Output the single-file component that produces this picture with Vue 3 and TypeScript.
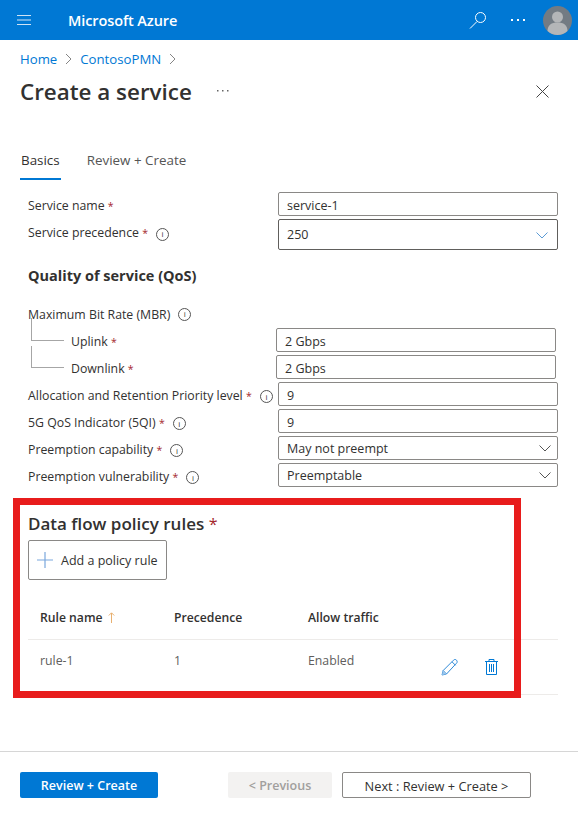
<script setup lang="ts">
// Create a service blade: basics form with the data flow rule table called out.
interface Field { label: string; value: string; select: boolean }

const qosFields: Field[] = [
  { label: "Allocation and Retention Priority level", value: "9", select: false },
  { label: "5G QoS Indicator (5QI)", value: "9", select: false },
  { label: "Preemption capability", value: "May not preempt", select: true },
  { label: "Preemption vulnerability", value: "Preemptable", select: true },
];
</script>

<template>
  <div class="page">
    <header class="topbar">
      <svg class="menu" width="14" height="10" viewBox="0 0 14 10"><path d="M0 .5h14M0 5h14M0 9.500h14" stroke="#cfe3f5" stroke-width="1.200" fill="none" /></svg>
      <span class="brand">Microsoft Azure</span>
      <svg class="search" width="18" height="18" viewBox="0 0 18 18" fill="none" stroke="#fff" stroke-width="1"><circle cx="11.500" cy="6.500" r="5" /><path d="M8 10.500l-7 7" /></svg>
      <svg class="more" width="14" height="3" viewBox="0 0 14 3" fill="#fff"><rect x="0" y="0" width="2" height="2" /><rect x="6" y="0" width="2" height="2" /><rect x="12" y="0" width="2" height="2" /></svg>
      <svg class="avatar" width="29" height="29" viewBox="0 0 29 29">
        <circle cx="14.500" cy="14.500" r="14.500" fill="#737b83" />
        <circle cx="14.500" cy="11" r="5.500" fill="#b4b6b8" />
        <path d="M4.500 25c0-6 4-8.500 10-8.500s10 2.500 10 8.500a14.500 14.500 0 0 1-20 0z" fill="#b4b6b8" />
      </svg>
    </header>

    <nav class="crumbs">
      <a>Home</a>
      <svg width="7" height="12" viewBox="0 0 7 12"><path d="M1 1l5 5-5 5" fill="none" stroke="#777" stroke-width=".9" /></svg>
      <a>ContosoPMN</a>
      <svg width="7" height="12" viewBox="0 0 7 12"><path d="M1 1l5 5-5 5" fill="none" stroke="#777" stroke-width=".9" /></svg>
    </nav>

    <div class="title-row">
      <h1>Create a service</h1>
      <svg class="title-more" width="12" height="2" viewBox="0 0 12 2" fill="#666"><rect x="0" y="0" width="1.500" height="1.500" /><rect x="5" y="0" width="1.500" height="1.500" /><rect x="10" y="0" width="1.500" height="1.500" /></svg>
      <svg class="close" width="13" height="13" viewBox="0 0 13 13"><path d="M.5.5l12 12M12.500.5l-12 12" stroke="#444" stroke-width="1" fill="none" /></svg>
    </div>

    <div class="tabs">
      <span class="tab active">Basics</span>
      <span class="tab">Review + Create</span>
    </div>

    <section class="form">
      <div class="row">
        <label>Service name <i>*</i></label>
        <div class="input text">service-1</div>
      </div>
      <div class="row row-tall">
        <label>Service precedence <i>*</i> <span class="info">i</span></label>
        <div class="input tall">250
          <svg class="chev blue" width="12" height="7" viewBox="0 0 12 7"><path d="M.5.5l5.500 5.500L11.500.5" fill="none" stroke="#5b9bd5" stroke-width="1" /></svg>
        </div>
      </div>

      <h2>Quality of service (QoS)</h2>

      <div class="mbr">Maximum Bit Rate (MBR) <span class="info">i</span></div>
      <div class="row sub">
        <span class="tree" />
        <label>Uplink <i>*</i></label>
        <div class="input text">2 Gbps</div>
      </div>
      <div class="row sub">
        <span class="tree second" />
        <label>Downlink <i>*</i></label>
        <div class="input text">2 Gbps</div>
      </div>
      <div v-for="f in qosFields" :key="f.label" class="row">
        <label>{{ f.label }} <i>*</i> <span class="info">i</span></label>
        <div class="input" :class="{ text: !f.select }">{{ f.value }}
          <svg v-if="f.select" class="chev" width="12" height="7" viewBox="0 0 12 7"><path d="M.5.5l5.500 5.500L11.500.5" fill="none" stroke="#555" stroke-width="1" /></svg>
        </div>
      </div>
    </section>

    <section class="rules">
      <h3>Data flow policy rules <i>*</i></h3>
      <button class="add">
        <svg width="16" height="16" viewBox="0 0 16 16"><path d="M8 0v16M0 8h16" stroke="#7ba7dd" stroke-width="1.200" /></svg>
        Add a policy rule
      </button>
      <div class="thead">
        <span>Rule name
          <svg class="sort" width="7" height="11" viewBox="0 0 7 11"><path d="M3.500 11V1M.8 3.500l2.700-2.700 2.700 2.700" fill="none" stroke="#e8b070" stroke-width="1" /></svg>
        </span>
        <span>Precedence</span>
        <span>Allow traffic</span>
      </div>
      <div class="tbody">
        <span>rule-1</span>
        <span>1</span>
        <span>Enabled</span>
        <svg class="edit" width="17" height="17" viewBox="0 0 17 17" fill="none" stroke="#2f8ad8" stroke-width="1"><path d="M1 16l1.200-4.500L12.500 1.200c1-1 2.200-1 3 0s1 2 0 3L5.500 15z" /><path d="M2.200 11.500l3.300 3.500M11 2.800l3.500 3.500" /><path d="M1 16l1.200-4.500 3.300 3.500z" fill="#9cc6ec" stroke="none" /></svg>
        <svg class="trash" width="13" height="16" viewBox="0 0 13 16" fill="none" stroke="#0078d4" stroke-width="1"><path d="M0 2.500h13M4 2.500V.5h5v2M1.500 2.500v13h10v-13M4.500 5v8M6.500 5v8M8.500 5v8" /></svg>
      </div>
      <div class="callout" />
    </section>

    <footer class="foot">
      <button class="btn primary">Review + Create</button>
      <button class="btn disabled">&lt; Previous</button>
      <button class="btn next">Next : Review + Create &gt;</button>
    </footer>
  </div>
</template>

<style scoped>
.page { width: 578px; height: 818px; overflow: hidden; background: #fff; color: #323130; font-family: "Open Sans", "Noto Sans", sans-serif; font-size: 12.300px; }
.topbar { height: 40px; background: #0078d4; display: flex; align-items: center; color: #fff; }
.menu { margin-left: 17px; }
.brand { margin-left: 37px; font-size: 14.500px; font-weight: 600; letter-spacing: -.1px; }
.search { margin-left: auto; }
.more { margin-left: 24px; }
.avatar { margin: 0 6px 0 18px; }
.crumbs { display: flex; align-items: center; gap: 8px; margin: 10px 0 0 20px; height: 18px; font-size: 13.200px; }
.crumbs a { color: #0078d4; }
.title-row { display: flex; align-items: center; margin: 6px 29px 0 20px; height: 34px; }
h1 { margin: 0; font-size: 22.400px; font-weight: 600; color: #323130; }
.title-more { margin-left: 25px; }
.close { margin-left: auto; }
.tabs { display: flex; gap: 25px; margin: 34px 0 0 20px; height: 38px; }
.tab { padding: 9px 1px 0; font-size: 13.400px; color: #555; }
.tab.active { color: #323130; border-bottom: 2px solid #0078d4; height: 27px; }
.form { margin: 0 20px 0 28px; padding-top: 12px; }
.row { position: relative; display: grid; grid-template-columns: 250px 280px; height: 24px; margin-bottom: 3px; align-items: center; }
.row-tall { height: 31px; margin-bottom: 0; align-items: start; }
.row label { white-space: nowrap; padding-top: 2px; }
.row-tall label { padding-top: 5px; }
i { font-style: normal; font-size: 10.500px; color: #a4262c; }
.info { display: inline-flex; align-items: center; justify-content: center; width: 11px; height: 11px; border: 1px solid #555; border-radius: 50%; font-size: 8px; line-height: 1; margin-left: 5px; }
.input { position: relative; height: 24px; box-sizing: border-box; border: 1px solid #8a8886; border-radius: 2px; padding: 0 8px; display: flex; align-items: center; font-size: 12.500px; }
.input.text { padding-top: 2px; }
.input.tall { height: 31px; border-color: #605e5c; }
.chev { position: absolute; right: 6px; top: 50%; margin-top: -3px; }
.chev.blue { right: 9px; }
h2 { margin: 0; padding-top: 16px; height: 32px; box-sizing: content-box; font-size: 14.500px; font-weight: 700; color: #323130; }
.mbr { height: 24px; margin: 4px 0 2px; display: flex; align-items: center; gap: 3px; }
.sub { grid-template-columns: 248px 280px; }
.sub label { padding-left: 43px; }
.tree { position: absolute; left: 3px; top: -10px; height: 23px; width: 33px; box-sizing: border-box; border-left: 1px solid #a6a6a6; border-bottom: 1px solid #a6a6a6; }
.tree.second { top: -9px; height: 22px; }
.rules { position: relative; margin-top: 11px; padding: 0 20px 0 28px; height: 200px; }
h3 { margin: 0; padding-top: 14px; height: 28px; font-size: 17px; font-weight: 600; color: #323130; }
h3 i { font-size: 16px; font-weight: 400; }
.add { display: flex; align-items: center; gap: 8px; width: 139px; height: 40px; margin: 0; padding: 0 8px; background: #fff; border: 1px solid #8a8886; border-radius: 2px; font: inherit; font-size: 12.500px; color: #323130; white-space: nowrap; }
.thead, .tbody { display: grid; grid-template-columns: 134px 134px 1fr; padding-left: 12px; align-items: center; }
.thead { margin-top: 17px; height: 43px; box-sizing: border-box; padding-bottom: 2px; border-bottom: 1px solid #edebe9; font-size: 12.200px; font-weight: 600; }
.sort { margin-left: 2px; vertical-align: -1px; }
.tbody { position: relative; height: 55px; box-sizing: border-box; padding-bottom: 14px; border-bottom: 1px solid #edebe9; color: #605e5c; }
.edit { position: absolute; left: 413px; top: 19px; }
.trash { position: absolute; left: 457px; top: 19px; }
.callout { position: absolute; left: 13px; top: 0; width: 508px; height: 200px; box-sizing: border-box; border: 7px solid #e81c1c; pointer-events: none; }
.foot { display: flex; align-items: center; height: 66px; margin-top: 53px; padding-left: 20px; border-top: 1px solid #d6d6d6; }
.btn { height: 26px; box-sizing: border-box; border-radius: 2px; padding-top: 2px; font: inherit; font-size: 12.500px; font-weight: 600; white-space: nowrap; border: 1px solid transparent; }
.primary { width: 138px; background: #0078d4; color: #fff; }
.disabled { width: 104px; margin-left: 70px; background: #f3f2f1; color: #a19f9d; }
.next { width: 189px; margin-left: 10px; background: #fff; border-color: #8a8886; color: #323130; font-size: 12.800px; font-weight: 400; }
</style>
